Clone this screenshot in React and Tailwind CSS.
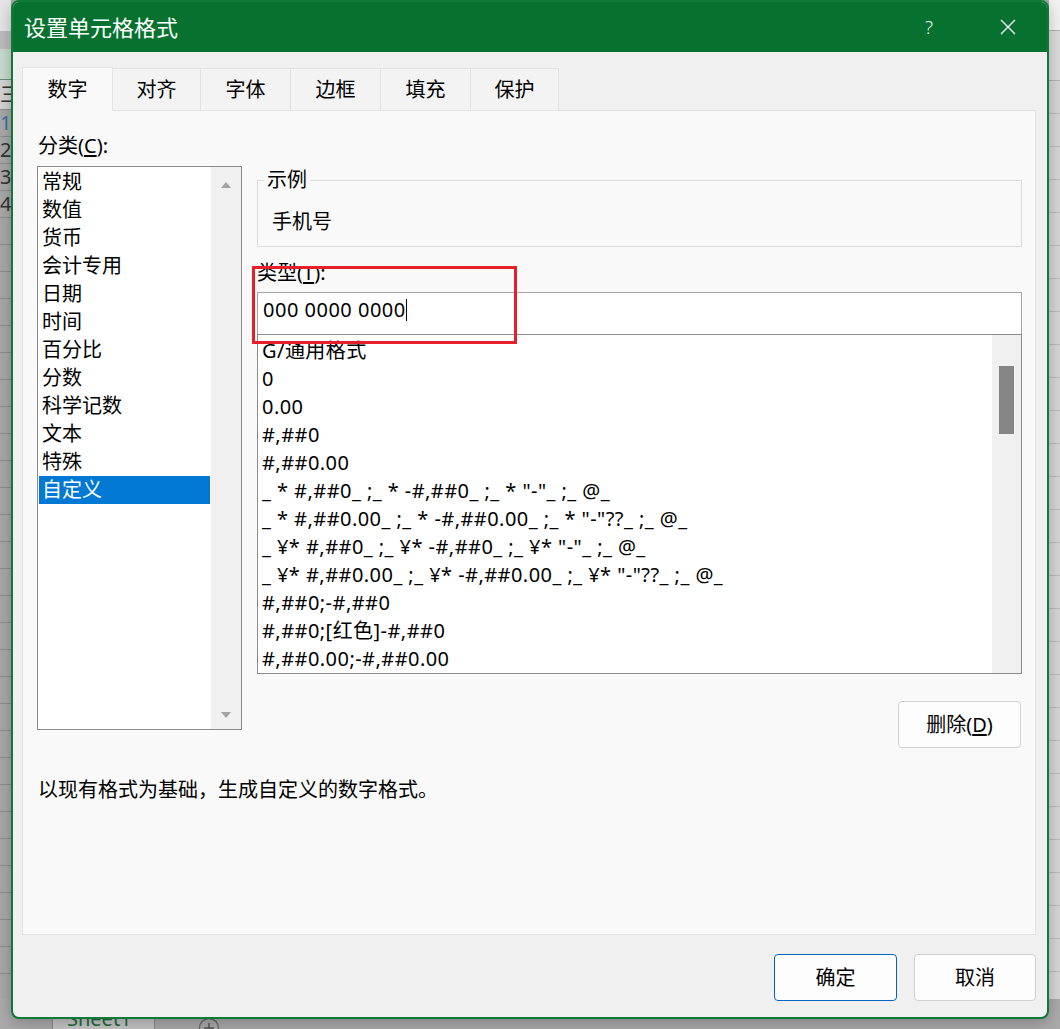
import React from 'react';

const categories = ['常规', '数值', '货币', '会计专用', '日期', '时间', '百分比', '分数', '科学记数', '文本', '特殊', '自定义'];

const formats = [
  'G/通用格式',
  '0',
  '0.00',
  '#,##0',
  '#,##0.00',
  '_ * #,##0_ ;_ * -#,##0_ ;_ * "-"_ ;_ @_',
  '_ * #,##0.00_ ;_ * -#,##0.00_ ;_ * "-"??_ ;_ @_',
  '_ ¥* #,##0_ ;_ ¥* -#,##0_ ;_ ¥* "-"_ ;_ @_',
  '_ ¥* #,##0.00_ ;_ ¥* -#,##0.00_ ;_ ¥* "-"??_ ;_ @_',
  '#,##0;-#,##0',
  '#,##0;[红色]-#,##0',
  '#,##0.00;-#,##0.00',
];

const tabs = [
  { label: '数字', w: 'w-[91px]' },
  { label: '对齐', w: 'w-[88px]' },
  { label: '字体', w: 'w-[90px]' },
  { label: '边框', w: 'w-[90px]' },
  { label: '填充', w: 'w-[90px]' },
  { label: '保护', w: 'w-[88px]' },
];

function LeftGrid() {
  const rows = ['12', '23', '34', '45'];
  return (
    <div className="flex w-[11px] flex-col overflow-hidden">
      <div className="h-[31px] shrink-0 bg-[#e6e6e6]" />
      <div className="h-[18px] shrink-0 bg-[#bdbdbd]" />
      <div className="h-[31px] shrink-0 border-b border-[#6f8f78] bg-[#c8dbcd]" />
      <div className="flex h-[30px] shrink-0 items-center border-b border-[#8e8e8e] bg-[#d4d4d4] text-[20px] leading-none text-[#333]">三</div>
      {Array.from({ length: 34 }).map((_, i) => (
        <div
          key={i}
          className={`flex h-[27px] shrink-0 items-center border-b border-[#8e8e8e] bg-[#a8a8a8] text-[20px] leading-none ${i === 0 ? 'text-[#3d6fa6]' : 'text-[#333]'}`}
        >
          {rows[i] || ''}
        </div>
      ))}
    </div>
  );
}

function RightGrid() {
  return (
    <div className="flex w-[11px] flex-col overflow-hidden">
      <div className="h-[31px] shrink-0 border-b border-[#b4b4b4] bg-[#f3f3f3]" />
      <div className="h-[50px] shrink-0 border-b border-[#b4b4b4] bg-[#dcdcdc]" />
      {Array.from({ length: 30 }).map((_, i) => (
        <div key={i} className="h-[33px] shrink-0 border-b border-[#bcbcbc] bg-[#d6d6d6]" />
      ))}
    </div>
  );
}

function SheetTabs() {
  return (
    <div className="flex h-[30px] shrink-0 items-start bg-[#ababab]">
      <div className="ml-[52px] h-full w-[103px] border-x border-[#8a8a8a] bg-[#c6c6c6] pl-[14px] pt-[8px] text-[20px] leading-[24px] text-[#1e6b3a]">
        Sheet1
      </div>
      <svg className="ml-[43px] mt-[18px]" width="22" height="22" viewBox="0 0 22 22">
        <circle cx="11" cy="11" r="9.5" fill="none" stroke="#666" strokeWidth="1.3" />
        <path d="M11 6v10M6 11h10" stroke="#555" strokeWidth="1.5" />
      </svg>
    </div>
  );
}

function Triangle({ up }) {
  return (
    <svg width="12" height="8" viewBox="0 0 12 8">
      <path d={up ? 'M6 1 L11 7 L1 7 Z' : 'M1 1 L11 1 L6 7 Z'} fill="#a3a3a3" />
    </svg>
  );
}

function CategoryList() {
  return (
    <div className="flex h-[564px] w-[205px] shrink-0 border border-[#8b8b8b] bg-white">
      <div className="flex-1 p-px">
        {categories.map((c, i) => (
          <div
            key={c}
            className={`h-[28px] pl-[3px] text-[20px] leading-[28px] ${i === 11 ? 'bg-[#0078d4] text-white' : 'text-black'}`}
          >
            {c}
          </div>
        ))}
      </div>
      <div className="flex w-[30px] flex-col items-center justify-between bg-[#f0f0f0] pb-[10px] pt-[14px]">
        <Triangle up />
        <Triangle />
      </div>
    </div>
  );
}

function TypeArea() {
  return (
    <div className="relative flex w-[765px] flex-col pt-[2px]">
      <fieldset className="h-[79px] border border-[#dcdcdc] pl-[6px]">
        <legend className="px-[3px] text-[20px] leading-[24px] text-black">示例</legend>
        <div className="mt-[18px] pl-[8px] text-[20px] leading-[24px] text-black">手机号</div>
      </fieldset>

      <div className="mt-[14px] text-[20px] leading-[24px] text-black">
        类型(<span className="underline underline-offset-2">T</span>):
      </div>

      <div className="mt-[7px] flex h-[42px] items-center border-x border-t border-[#a6a6a6] bg-white pb-[7px] pl-[5px] text-[20px] leading-[24px] tracking-[0.5px] text-black">
        <span>000 0000 0000</span>
        <span className="h-[22px] w-px bg-black" />
      </div>

      <div className="flex h-[340px] border border-[#8b8b8b] bg-white">
        <div className="flex-1 overflow-hidden pl-[4px] pt-[2px]">
          {formats.map((f) => (
            <div key={f} className="h-[28px] whitespace-pre text-[20px] leading-[28px] tracking-[0.45px] text-black">
              {f}
            </div>
          ))}
        </div>
        <div className="w-[29px] bg-[#f0f0f0] pl-[7px] pt-[31px]">
          <div className="h-[68px] w-[15px] bg-[#868686]" />
        </div>
      </div>

      <button className="mr-px mt-[27px] h-[47px] w-[123px] self-end rounded-[4px] border border-[#d0d0d0] bg-[#fdfdfd] text-[20px] leading-[24px] text-black">
        删除(<span className="underline underline-offset-2">D</span>)
      </button>

      {/* annotation box */}
      <div className="absolute left-[-5px] top-[100px] h-[78px] w-[265px] border-[3px] border-[#e5202b]" />
    </div>
  );
}

function Dialog() {
  return (
    <div className="absolute left-[11px] top-0 flex h-[1019px] w-[1038px] flex-col overflow-hidden rounded-[8px] border-2 border-[#0f7a38] bg-[#f0f0f0] shadow-[0_4px_16px_rgba(0,0,0,0.25)]">
      <div className="flex h-[50px] shrink-0 items-center bg-[#077230] pl-[11px] text-white">
        <span className="text-[22px] leading-[28px]">设置单元格格式</span>
        <span className="ml-auto mr-[67px] text-[19px] font-light leading-none text-[#e8f1ea]">?</span>
        <svg className="mr-[31px]" width="16" height="16" viewBox="0 0 16 16">
          <path d="M1 1 L15 15 M15 1 L1 15" stroke="#ffffff" strokeWidth="1.3" />
        </svg>
      </div>

      <div className="flex flex-1 flex-col pl-[9px] pr-[11px] pt-[15px]">
        <div className="flex h-[43px] items-end">
          {tabs.map((t, i) => (
            <div
              key={t.label}
              className={
                i === 0
                  ? `relative z-10 -mb-px flex h-[44px] ${t.w} items-center justify-center border-x border-t border-[#e3e3e3] bg-[#f9f9f9] text-[20px] text-black`
                  : `flex h-[42px] ${t.w} items-center justify-center border-r border-t border-[#e1e1e1] bg-[#f3f3f3] text-[20px] text-black`
              }
            >
              {t.label}
            </div>
          ))}
        </div>

        <div className="flex h-[825px] flex-col border border-[#e3e3e3] bg-[#f9f9f9] pl-[14px] pt-[23px]">
          <div className="ml-px text-[20px] leading-[24px] text-black">
            分类(<span className="underline underline-offset-2">C</span>):
          </div>
          <div className="mt-[8px] flex items-start gap-[15px]">
            <CategoryList />
            <TypeArea />
          </div>
          <div className="ml-px mt-[30px] text-[20px] leading-[24px] text-black">
            以现有格式为基础，生成自定义的数字格式。
          </div>
        </div>

        <div className="mt-[19px] flex justify-end gap-[17px]">
          <button className="h-[47px] w-[123px] rounded-[4px] border border-[#0067c0] bg-[#fdfdfd] text-[20px] text-black">确定</button>
          <button className="h-[47px] w-[122px] rounded-[4px] border border-[#d0d0d0] bg-[#fdfdfd] text-[20px] text-black">取消</button>
        </div>
      </div>
    </div>
  );
}

export default function App() {
  return (
    <div className="relative h-[1029px] w-[1060px] overflow-hidden bg-[#a9a9a9] font-['Noto_Sans','Noto_Sans_CJK_SC',sans-serif]">
      <div className="flex h-full flex-col">
        <div className="flex flex-1 justify-between overflow-hidden">
          <LeftGrid />
          <RightGrid />
        </div>
        <SheetTabs />
      </div>
      <Dialog />
    </div>
  );
}
